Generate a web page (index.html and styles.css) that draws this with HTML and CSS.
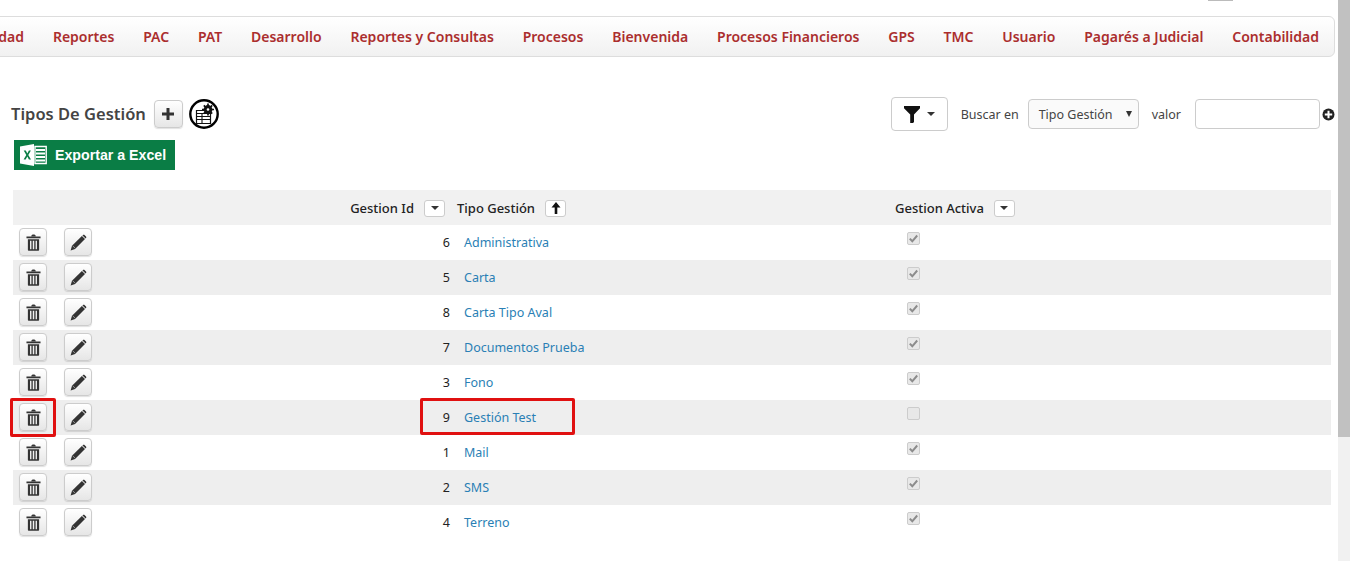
FILE: index.html
```html
<!DOCTYPE html>
<html lang="en">
<head>
    <meta charset="UTF-8">
    <meta name="viewport" content="width=device-width, initial-scale=1.0">
    <title>Tipos De Gestión</title>
    <link rel="stylesheet" href="styles.css">
</head>
<body>
    <svg class="icon-defs" width="0" height="0">
        <symbol id="trash" viewBox="0 0 16 18">
            <path d="M5.5 2.6C5.7 1 6.6.4 8 .4s2.300.6 2.500 2.200z" fill="#333"/>
            <rect x="0.500" y="2.600" width="15" height="1.900" fill="#333"/>
            <path d="M2 5.500h12v11.200c0 .7-.5 1.100-1.100 1.100H3.100c-.6 0-1.100-.4-1.100-1.100zM4.300 7.200v8.900h1.500V7.200zM7.200 7.200v8.900h1.600V7.200zM10.200 7.200v8.900h1.500V7.200z" fill="#333" fill-rule="evenodd"/>
        </symbol>
        <symbol id="pencil" viewBox="0 0 17 17">
            <path d="M.6 16.400l1.400-4.600L11.900 2l3.100 3.100-9.900 9.800z" fill="#333"/>
            <path d="M12.900 1c.5-.5 1.100-.5 1.600 0l1.500 1.500c.5.500.5 1.100 0 1.600l-.4.400-3.100-3.100z" fill="#333"/>
            <path d="M2.700 11.800l2.500 2.500" stroke="#ddd" stroke-width=".6"/>
        </symbol>
    </svg>

    <div class="top-tab"></div>

    <div class="layout">
        <div class="page">
            <nav class="menu">
                <a>dad</a>
                <a>Reportes</a>
                <a>PAC</a>
                <a>PAT</a>
                <a>Desarrollo</a>
                <a>Reportes y Consultas</a>
                <a>Procesos</a>
                <a>Bienvenida</a>
                <a>Procesos Financieros</a>
                <a>GPS</a>
                <a>TMC</a>
                <a>Usuario</a>
                <a>Pagarés a Judicial</a>
                <a>Contabilidad</a>
            </nav>

            <div class="toolbar">
                <div class="toolbar-left">
                    <div class="title-row">
                        <h1>Tipos De Gestión</h1>
                        <button class="btn btn-add">
                            <svg width="12" height="12" viewBox="0 0 12 12"><path d="M4.500 0h3v4.500H12v3H7.500V12h-3V7.500H0v-3h4.500z" fill="#333"/></svg>
                        </button>
                        <span class="config-icon">
                            <svg width="30" height="30" viewBox="0 0 30 30">
                                <circle cx="15" cy="15" r="13.700" fill="#fff" stroke="#000" stroke-width="2.400"/>
                                <path d="M7.500 11.500h14v13h-14z" fill="#fff" stroke="#111" stroke-width="1.200"/>
                                <path d="M7.500 14.500h14M7.500 17.500h14M7.500 20.500h14M13 14.500v10" stroke="#111" stroke-width="1.100"/>
                                <circle cx="19" cy="10.500" r="4.400" fill="#111"/>
                                <path d="M19 4.500v12M13 10.500h12M14.800 6.300l8.400 8.400M23.200 6.300l-8.400 8.400" stroke="#111" stroke-width="1.700"/>
                                <circle cx="19" cy="10.500" r="1.300" fill="#fff"/>
                            </svg>
                        </span>
                    </div>
                    <a class="excel-btn">
                        <svg width="27" height="22" viewBox="0 0 27 22">
                            <path d="M0 2.500L14 0v22L0 19.500z" fill="#fff"/>
                            <path d="M3.700 6.500h2.100l1.500 2.900 1.600-2.900h2l-2.600 4.400 2.700 4.600H8.900l-1.600-3-1.600 3H3.600l2.700-4.600z" fill="#0a7d45"/>
                            <path d="M15 2.500h11.200v17H15z" fill="none" stroke="#fff" stroke-width="1.400"/>
                            <path d="M16 6h9M16 9.500h9M16 13h9M16 16.500h9" stroke="#fff" stroke-width="1.800"/>
                        </svg>
                        <span>Exportar a Excel</span>
                    </a>
                </div>
                <div class="search">
                    <button class="btn-filter">
                        <svg width="16" height="17" viewBox="0 0 16 17"><path d="M0 0h16v2.200L10 8.500V16l-1 1H6.200V8.500L0 2.200z" fill="#111"/></svg>
                        <span class="caret"></span>
                    </button>
                    <span class="search-label label-buscar">Buscar en</span>
                    <div class="fake-select">
                        <span>Tipo Gestión</span>
                        <svg width="6" height="6" viewBox="0 0 6 6"><path d="M0 0h6L3 6z" fill="#333"/></svg>
                    </div>
                    <span class="search-label label-valor">valor</span>
                    <input class="search-input" type="text">
                    <svg class="add-filter" width="13" height="13" viewBox="0 0 13 13">
                        <circle cx="6.500" cy="6.500" r="6" fill="#222"/>
                        <path d="M5.500 2.800h2v2.700h2.700v2H7.500v2.700h-2V7.500H2.800v-2h2.700z" fill="#fff"/>
                    </svg>
                </div>
            </div>

            <table class="grid">
                <colgroup>
                    <col class="col-del">
                    <col class="col-edit">
                    <col class="col-id">
                    <col class="col-tipo">
                    <col>
                </colgroup>
                <thead>
                    <tr>
                        <th></th>
                        <th></th>
                        <th><div class="th-in th-id">Gestion Id <span class="sort"><span class="caret"></span></span></div></th>
                        <th><div class="th-in">Tipo Gestión <span class="sort sort-up"><svg width="10" height="12" viewBox="0 0 10 12"><path d="M5 0l4.500 5.500H6.300V12H3.700V5.500H.5z" fill="#111"/></svg></span></div></th>
                        <th><div class="th-in">Gestion Activa <span class="sort"><span class="caret"></span></span></div></th>
                    </tr>
                </thead>
                <tbody id="rows"></tbody>
            </table>
        </div>

        <div class="scrollbar"><div class="scroll-thumb"></div></div>
    </div>

    <div class="mark mark-del"></div>
    <div class="mark mark-row"></div>

    <script>
        const gestiones = [
            [6, 'Administrativa', true],
            [5, 'Carta', true],
            [8, 'Carta Tipo Aval', true],
            [7, 'Documentos Prueba', true],
            [3, 'Fono', true],
            [9, 'Gestión Test', false],
            [1, 'Mail', true],
            [2, 'SMS', true],
            [4, 'Terreno', true]
        ];

        const rows = document.getElementById('rows');
        gestiones.forEach(([id, tipo, activa]) => {
            const tr = document.createElement('tr');
            tr.innerHTML = `
                <td><button class="btn btn-row btn-del"><svg width="15" height="17"><use href="#trash"/></svg></button></td>
                <td><button class="btn btn-row"><svg width="17" height="17"><use href="#pencil"/></svg></button></td>
                <td class="td-id">${id}</td>
                <td class="td-tipo"><a>${tipo}</a></td>
                <td class="td-check"><span class="check ${activa ? 'on' : ''}">${activa ? '<svg width="9" height="9" viewBox="0 0 9 9"><path d="M.8 4.600l2.500 2.700L8.200 1.500" fill="none" stroke="#8c8c8c" stroke-width="2"/></svg>' : ''}</span></td>
            `;
            rows.appendChild(tr);
        });
    </script>
</body>
</html>
```

FILE: styles.css
```css
html, body {
    margin: 0;
    height: 561px;
    overflow: hidden;
    background-color: #fff;
}

body {
    font-family: "Noto Sans", "Open Sans", Arial, sans-serif;
    font-size: 12.5px;
    color: #333;
}

.icon-defs {
    position: absolute;
}

.top-tab {
    position: absolute;
    top: 0;
    left: 1208px;
    width: 25px;
    height: 1px;
    background-color: #bbb;
}

.layout {
    display: flex;
    height: 561px;
}

.page {
    width: 1338px;
    flex: none;
    overflow: hidden;
}

.scrollbar {
    width: 12px;
    background-color: #f1f1f1;
}

.scroll-thumb {
    height: 437px;
    background-color: #c1c1c1;
}

/* menu */
.menu {
    display: flex;
    justify-content: flex-end;
    gap: 28.800px;
    height: 41px;
    box-sizing: border-box;
    margin: 16px 3px 0 -8px;
    padding-right: 15px;
    border: 1px solid #ddd;
    border-radius: 6px;
    background: linear-gradient(to bottom, #fff, #f1f1f1);
}

.menu a {
    flex: none;
    line-height: 39px;
    font-size: 14px;
    font-weight: 600;
    color: #ab2e2e;
}

/* toolbar */
.toolbar {
    display: flex;
    justify-content: space-between;
    align-items: flex-start;
    margin-top: 40px;
    padding-right: 3px;
}

.toolbar-left {
    padding-left: 11px;
}

.title-row {
    display: flex;
    align-items: center;
    height: 34px;
}

.title-row h1 {
    margin: 0 8px 2px 0;
    font-size: 16.500px;
    font-weight: 600;
    color: #444;
}

.config-icon {
    display: flex;
    margin-left: 6px;
}

.btn {
    display: flex;
    align-items: center;
    justify-content: center;
    padding: 0;
    border: 1px solid #ccc;
    border-radius: 4px;
    background: linear-gradient(to bottom, #fff, #e6e6e6);
    box-shadow: 0 1px 1px rgba(0, 0, 0, 0.12);
}

.btn-add {
    width: 29px;
    height: 28px;
}

.excel-btn {
    display: flex;
    align-items: center;
    gap: 8px;
    width: 161px;
    height: 30px;
    box-sizing: border-box;
    margin: 9px 0 0 3px;
    padding-left: 6px;
    background-color: #0a7d45;
    color: #fff;
    font-family: "Liberation Sans", Arial, sans-serif;
    font-size: 14.200px;
    font-weight: bold;
}

.search {
    display: flex;
    align-items: center;
    height: 34px;
}

.btn-filter {
    display: flex;
    align-items: center;
    justify-content: center;
    gap: 7px;
    width: 57px;
    height: 34px;
    padding: 0;
    border: 1px solid #ccc;
    border-radius: 4px;
    background-color: #fff;
}

.caret {
    display: inline-block;
    width: 0;
    height: 0;
    border-top: 4px solid #333;
    border-left: 4px solid transparent;
    border-right: 4px solid transparent;
}

.search-label {
    color: #444;
}

.label-buscar {
    margin: 0 9px 0 13px;
}

.label-valor {
    margin: 0 14px 0 13px;
}

.fake-select {
    display: flex;
    align-items: center;
    justify-content: space-between;
    width: 111px;
    height: 30px;
    box-sizing: border-box;
    padding: 0 6px 0 10px;
    border: 1px solid #ccc;
    border-radius: 4px;
    background-color: #fafafa;
    color: #444;
}

.search-input {
    width: 125px;
    height: 30px;
    box-sizing: border-box;
    padding: 0;
    border: 1px solid #ccc;
    border-radius: 4px;
}

.add-filter {
    margin-left: 2px;
}

/* grid */
.grid {
    width: 1318px;
    margin: 20px 0 0 13px;
    border-collapse: collapse;
    table-layout: fixed;
    color: #222;
}

.col-del {
    width: 51px;
}

.col-edit {
    width: 40px;
}

.col-id {
    width: 353px;
}

.col-tipo {
    width: 438px;
}

.grid th {
    height: 35px;
    padding: 0;
    background-color: #f1f1f1;
    font-size: 13px;
    font-weight: 500;
    text-align: left;
}

.th-in {
    display: flex;
    align-items: center;
    gap: 10px;
    padding-top: 1px;
}

.th-id {
    justify-content: flex-end;
    padding-right: 12px;
}

.sort {
    display: flex;
    align-items: center;
    justify-content: center;
    width: 21px;
    height: 17px;
    box-sizing: border-box;
    border: 1px solid #ccc;
    border-radius: 3px;
    background-color: #fff;
}

.grid td {
    height: 35px;
    padding: 0;
}

.grid tbody tr:nth-child(even) {
    background-color: #eee;
}

.btn-row {
    width: 28px;
    height: 28px;
    margin-top: -1px;
}

.btn-del {
    margin-left: 6px;
}

.td-id {
    padding-right: 7px !important;
    text-align: right;
}

.td-tipo {
    padding-left: 7px !important;
}

.td-tipo a {
    color: #2a7fb5;
}

.td-check {
    padding-left: 12px !important;
}

.check {
    display: block;
    width: 11px;
    height: 11px;
    margin-top: -9px;
    border: 1px solid #ccc;
    border-radius: 2px;
    background-color: #e8e8e8;
    line-height: 0;
}

.check svg {
    margin: 1px;
}

/* red marks drawn over the screenshot */
.mark {
    position: absolute;
    box-sizing: border-box;
    border: 3px solid #e01010;
    border-radius: 2px;
}

.mark-del {
    left: 10px;
    top: 398px;
    width: 46px;
    height: 39px;
}

.mark-row {
    left: 420px;
    top: 398px;
    width: 155px;
    height: 37px;
}
```
